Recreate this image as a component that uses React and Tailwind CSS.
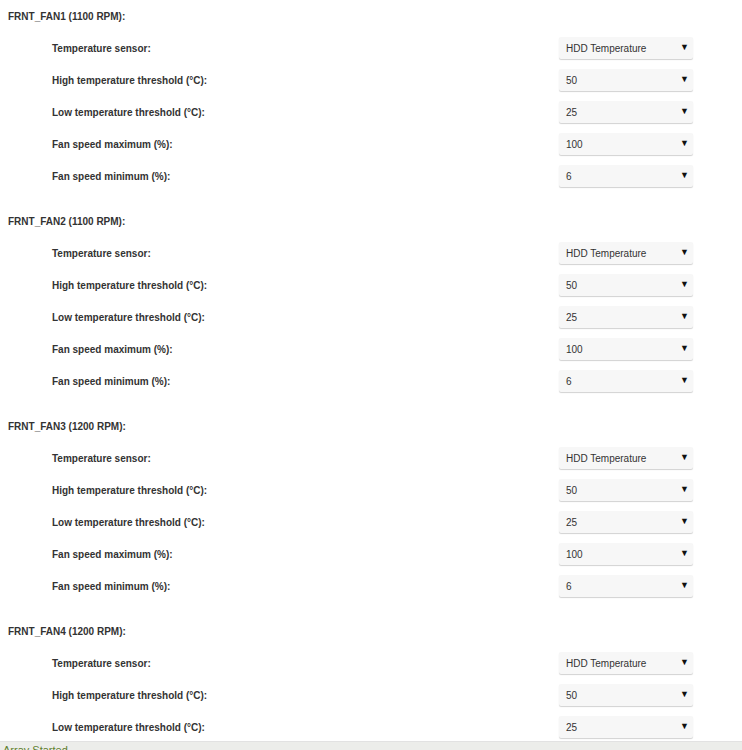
import React from 'react';

const FANS = [
    { name: "FRNT_FAN1", rpm: 1100 },
    { name: "FRNT_FAN2", rpm: 1100 },
    { name: "FRNT_FAN3", rpm: 1200 },
    { name: "FRNT_FAN4", rpm: 1200, rows: 3 },
];

const SETTINGS = [
    { label: "Temperature sensor:", value: "HDD Temperature" },
    { label: "High temperature threshold (°C):", value: "50" },
    { label: "Low temperature threshold (°C):", value: "25" },
    { label: "Fan speed maximum (%):", value: "100" },
    { label: "Fan speed minimum (%):", value: "6" },
];

/* dropdown box with the small black caret on the right */
function Dropdown({ value }) {
    return (
        <div className="w-[134px] h-[22px] flex items-center justify-between pl-[7px] pr-[4px] bg-[#f7f7f7] rounded-[2px] shadow-[0_1px_1px_rgba(0,0,0,0.18)] text-[10px] text-[#333]">
            <span>{value}</span>
            <span className="text-[9px] text-[#111]">▼</span>
        </div>
    );
}

function FanBlock({ fan }) {
    const rows = SETTINGS.slice(0, fan.rows ?? SETTINGS.length);
    return (
        <section className="h-[205px] shrink-0">
            <div className="h-[32px] flex items-center pl-[8px] font-bold text-[10px] text-[#333]">
                {fan.name} ({fan.rpm} RPM):
            </div>
            {rows.map((s) => (
                <div key={s.label} className="h-[32px] flex items-center">
                    <div className="w-[559px] pl-[52px] font-bold text-[10px] text-[#333]">{s.label}</div>
                    <Dropdown value={s.value} />
                </div>
            ))}
        </section>
    );
}

export default function App() {
    return (
        <div className="w-[742px] h-[750px] overflow-hidden bg-white flex flex-col font-['Liberation_Sans',Arial,sans-serif]">
            <div className="h-[741px] shrink-0 overflow-hidden flex flex-col">
                {FANS.map((fan) => (
                    <FanBlock key={fan.name} fan={fan} />
                ))}
            </div>
            <footer className="flex-1 bg-[#ecedea] border-t border-[#e2e2e2] pl-[3px] pt-[3px] text-[11px] leading-none text-[#5f7f2c]">
                Array Started
            </footer>
        </div>
    );
}
